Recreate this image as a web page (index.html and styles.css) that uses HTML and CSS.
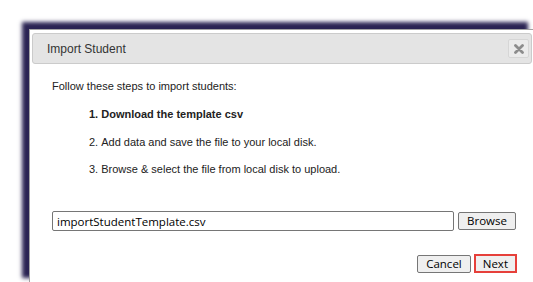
FILE: index.html
```html
<!DOCTYPE html>
<html lang="en">
<head>
  <meta charset="UTF-8">
  <meta name="viewport" content="width=device-width, initial-scale=1.0">
  <title>Import Student</title>
  <link rel="stylesheet" href="styles.css">
</head>
<body>
  <div class="modal">
    <div class="modal-header">
      <span class="modal-title">Import Student</span>
      <button type="button" class="close-btn" title="Close">
        <svg width="10" height="10" viewBox="0 0 10 10">
          <path d="M1.5 1.5 L8.5 8.5 M8.5 1.5 L1.5 8.5" stroke="#8c8c8c" stroke-width="2.8" stroke-linecap="round"/>
        </svg>
      </button>
    </div>
    <div class="modal-body">
      <p class="intro">Follow these steps to import students:</p>
      <ol class="steps">
        <li class="current">Download the template csv</li>
        <li>Add data and save the file to your local disk.</li>
        <li>Browse &amp; select the file from local disk to upload.</li>
      </ol>
      <div class="file-row">
        <input type="text" class="file-name" value="importStudentTemplate.csv" readonly>
        <button type="button" class="btn">Browse</button>
      </div>
      <div class="actions">
        <button type="button" class="btn">Cancel</button>
        <button type="button" class="btn btn-next">Next</button>
      </div>
    </div>
  </div>
</body>
</html>
```
FILE: styles.css
```css
html, body {
  height: 100%;
}
body {
  font-family: "Liberation Sans", Arial, sans-serif;
  background-color: #fff;
  margin: 0;
  padding: 29px 0 0 29px;
  box-sizing: border-box;
  overflow: hidden;
}
.modal {
  width: 500px;
  height: 248px;
  padding: 3px 2px;
  border: 1px solid #a3a3a3;
  background-color: #fff;
  box-shadow: -7px -7px 4px #2b2453;
}
.modal-header {
  height: 29px;
  border: 1px solid #cbcbcb;
  border-radius: 3px;
  background-color: #e4e4e4;
  display: flex;
  align-items: center;
  justify-content: space-between;
  padding: 0 2px 0 14px;
}
.modal-title {
  font-size: 12px;
  color: #333;
}
.close-btn {
  width: 21px;
  height: 19px;
  padding: 0;
  border: 1px solid #d6d6d6;
  border-radius: 2px;
  background-color: #ebebeb;
  display: flex;
  align-items: center;
  justify-content: center;
}
.modal-body {
  padding: 15px 15px 0 20px;
  font-size: 11px;
  color: #222;
}
.intro {
  margin: 0;
  line-height: 14px;
}
.steps {
  margin: 14px 0 0;
  padding-left: 37px;
  list-style-position: inside;
}
.steps li {
  line-height: 14px;
  margin-bottom: 13.5px;
}
.steps li.current {
  font-weight: bold;
}
.file-row {
  display: flex;
  align-items: center;
  gap: 4px;
  margin-top: 35px;
}
.file-name {
  width: 402px;
  height: 20px;
  box-sizing: border-box;
  padding: 0 4px;
  border: 1px solid #767676;
  border-radius: 2px;
  font-family: "Open Sans", sans-serif;
  font-size: 11.5px;
  color: #000;
}
.btn {
  height: 18px;
  padding: 0 8px;
  border: 1px solid #767676;
  border-radius: 2px;
  background-color: #efefef;
  font-family: "Open Sans", sans-serif;
  font-size: 11.5px;
  line-height: 14px;
  color: #000;
}
.actions {
  display: flex;
  justify-content: flex-end;
  align-items: center;
  gap: 3px;
  margin-top: 23px;
}
.btn-next {
  height: 19px;
  padding: 0 7px;
  border: 2px solid #e6403a;
  border-radius: 0;
}
```
